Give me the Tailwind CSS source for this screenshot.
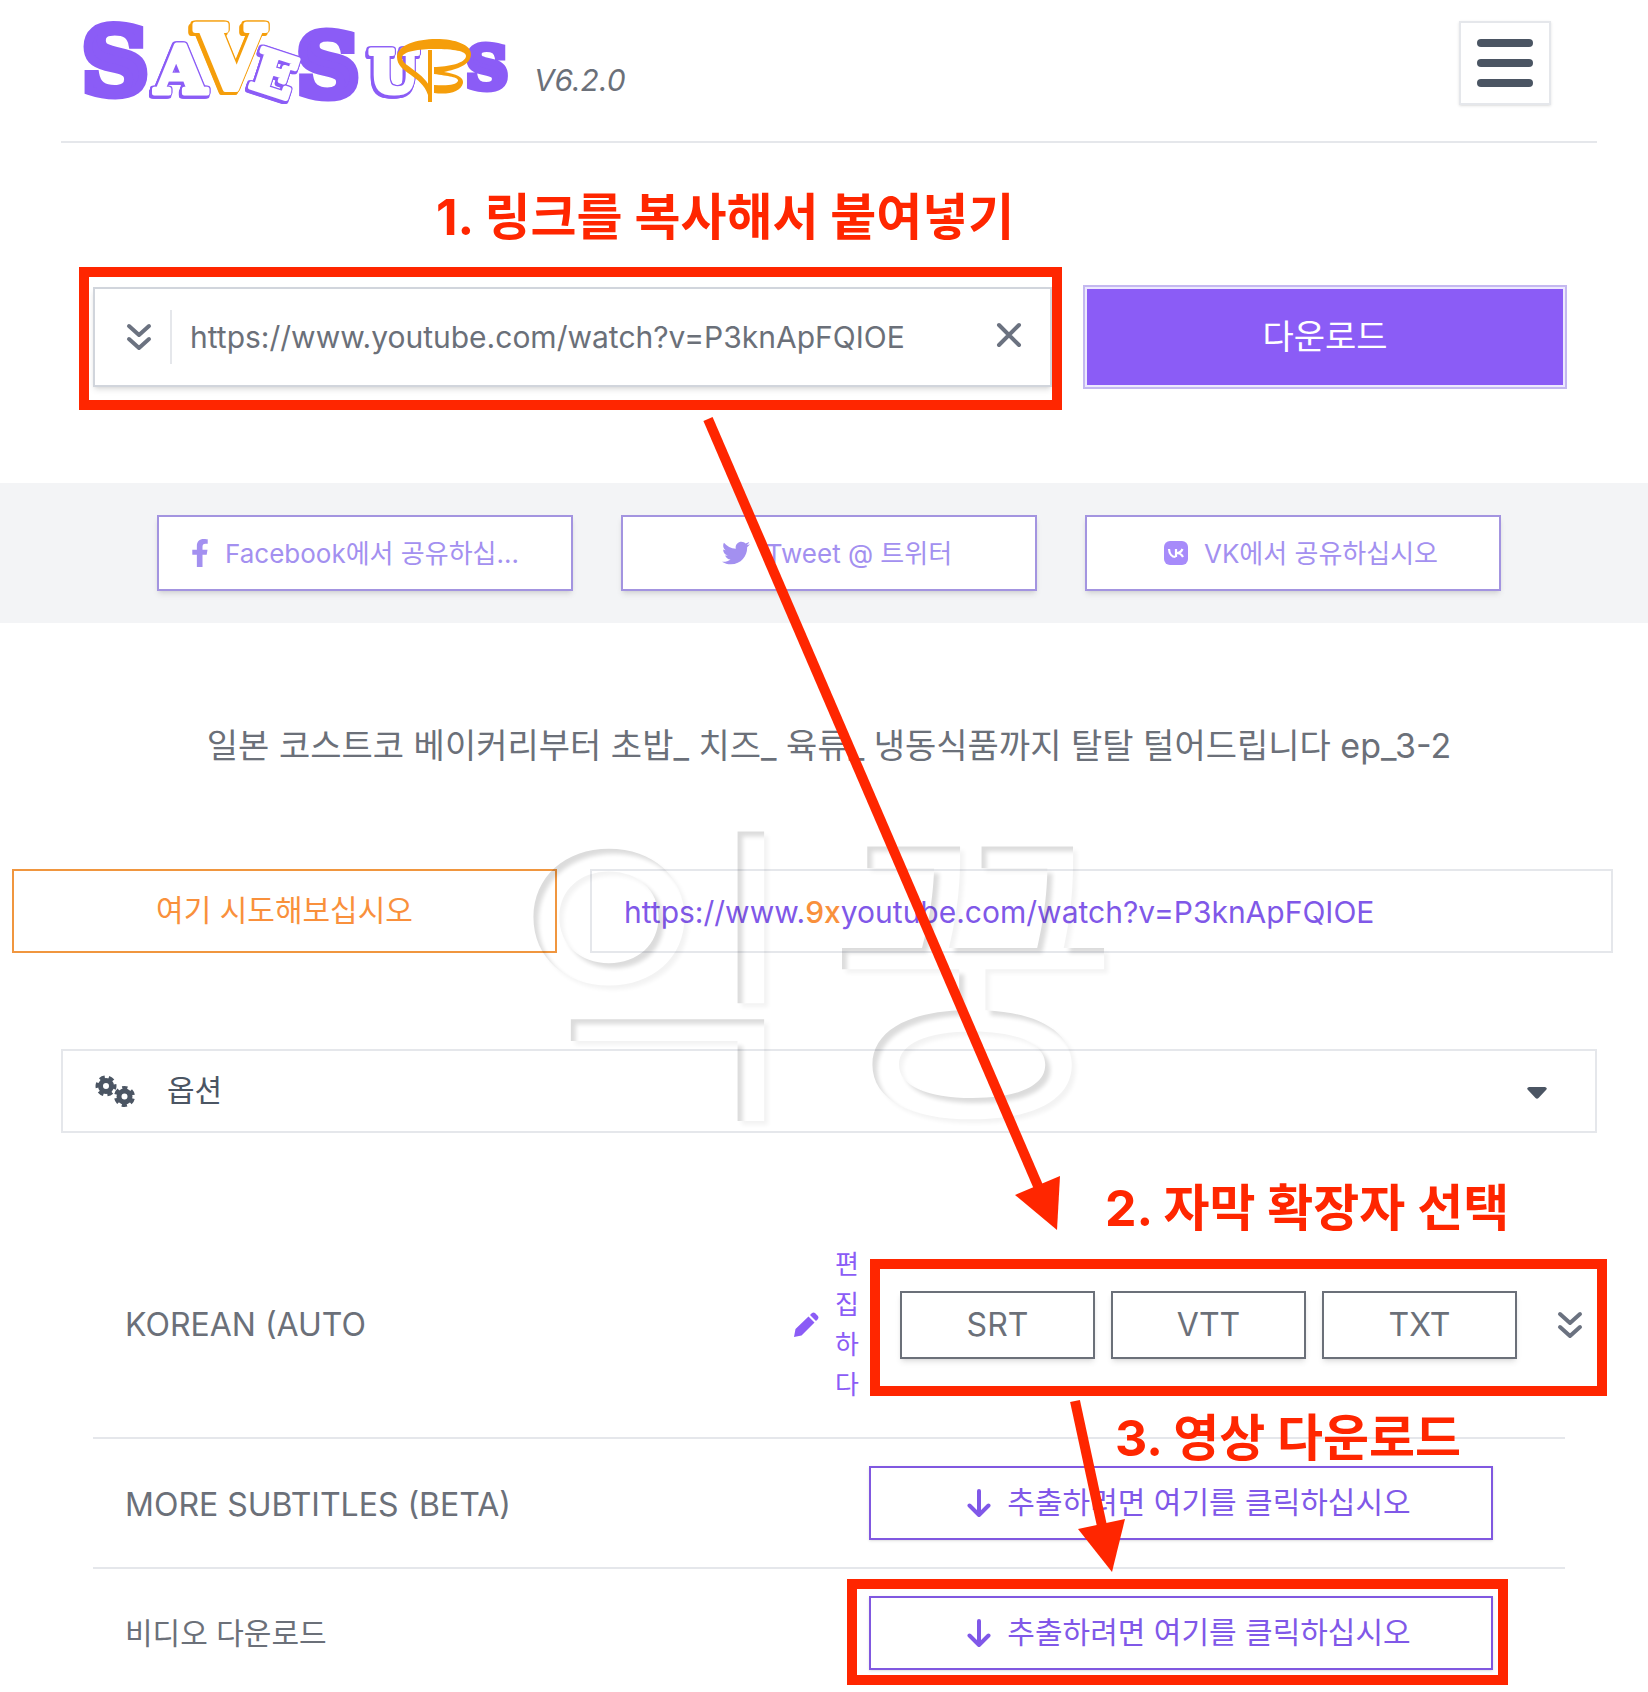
<!DOCTYPE html>
<html lang="ko">
<head>
<meta charset="utf-8">
<meta name="viewport" content="width=device-width, initial-scale=1">
<title>SaveSubs</title>
<script src="https://cdn.jsdelivr.net/npm/@tailwindcss/browser@4"></script>
</head>
<body class="bg-white font-['Inter','Noto_Sans_CJK_KR',sans-serif] text-[#6b7079]">
<div class="relative overflow-hidden pb-[22px]">

  <!-- Header -->
  <header class="ml-[61px] mr-[51px] flex h-[143px] items-start justify-between border-b-2 border-gray-200 pt-[21px] pr-[46px] pl-[21px]">
    <div class="flex items-start">
      <a href="#" aria-label="SaveSubs">
        <svg class="h-[88px] w-[432px] overflow-visible" viewBox="0 0 432 88" font-family="DejaVu Serif" font-weight="700">
          <g fill="#8b5cf6" stroke="#8b5cf6" stroke-width="9">
            <text x="0" y="73" font-size="92">S</text>
            <text x="215" y="75" font-size="86">S</text>
            <text x="384" y="67" font-size="58" stroke-width="7">S</text>
          </g>
          <g class="[filter:drop-shadow(1px_0_0_#8b5cf6)_drop-shadow(-2px_0_0_#8b5cf6)_drop-shadow(0_-1px_0_#8b5cf6)_drop-shadow(-1px_3px_0_#8b5cf6)]" fill="#fff" stroke="#fff" stroke-width="5" stroke-linejoin="round">
            <text x="73" y="72" font-size="66">A</text>
            <text x="171" y="72" font-size="56" transform="rotate(18 190 53)">E</text>
            <text x="287" y="71" font-size="57">U</text>
          </g>
          <g class="[filter:drop-shadow(1px_0_0_#f59e0b)_drop-shadow(-2px_0_0_#f59e0b)_drop-shadow(0_-1px_0_#f59e0b)_drop-shadow(-2px_3px_0_#f59e0b)]" fill="#fff" stroke="#fff" stroke-width="6" stroke-linejoin="round">
            <text x="114" y="68" font-size="88">V</text>
          </g>
          <g fill="#f59e0b">
            <path d="M346 29h4v52h-4z"/>
            <path d="M346 74C340 54 315 52 315 36C315 24 335 18 354 18C374 18 389 24 389 33C389 44 375 48 362 51C374 53 382 56 381 62C379 71 366 74 352 72V64C366 65 374 64 376 60C377 56 366 55 352 53V46C366 46 384 42 384 35C384 30 372 28 352 28C338 28 320 30 320 37C321 46 342 50 350 70Z"/>
          </g>
        </svg>
      </a>
      <span class="ml-5 pt-[39px] text-[30px] leading-10 italic">V6.2.0</span>
    </div>
    <button class="flex h-[84px] w-[92px] flex-col items-center justify-center gap-3 border-2 border-gray-200 shadow-sm" aria-label="Menu">
      <span class="h-2 w-14 rounded-full bg-[#4b5563]"></span>
      <span class="h-2 w-14 rounded-full bg-[#4b5563]"></span>
      <span class="h-2 w-14 rounded-full bg-[#4b5563]"></span>
    </button>
  </header>

  <!-- Search -->
  <form class="mr-[81px] ml-[93px] grid grid-cols-[959fr_484fr] gap-[31px] pt-[144px]">
    <div class="relative flex h-[100px] min-w-0 items-center border-2 border-gray-300 pl-[31px] shadow-md">
      <svg class="h-[28px] w-[26px]" viewBox="0 0 26 28" fill="none" stroke="#6b7280" stroke-width="4" stroke-linecap="round" stroke-linejoin="round"><path d="M3 3l10 9 10-9M3 16l10 9 10-9"/></svg>
      <span class="ml-[18px] h-[54px] w-0.5 bg-gray-200"></span>
      <input class="ml-[18px] min-w-0 flex-1 text-[30px] leading-10 outline-none" type="text" aria-label="URL" value="https://www.youtube.com/watch?v=P3knApFQIOE">
      <button type="button" class="mr-7 mb-1" aria-label="Clear"><svg class="size-[26px]" viewBox="0 0 26 26" stroke="#6b7280" stroke-width="4" stroke-linecap="round"><path d="M3 3l20 20M23 3L3 23"/></svg></button>
      <span class="pointer-events-none absolute -top-[22px] -right-[12px] -bottom-[25px] -left-4 border-10 border-[#ff2600]"></span>
    </div>
    <button type="button" class="-mt-0.5 h-[104px] border-2 border-[#c4b8f0] bg-[#ede9fe] p-0.5"><span class="flex h-full items-center justify-center bg-[#8b5cf6] pb-0.5 text-[34px] text-white">다운로드</span></button>
  </form>

  <!-- Share -->
  <div class="mt-[94px] grid h-[140px] grid-cols-3 items-center gap-12 bg-gray-100 pr-[147px] pl-[157px] text-[26px] text-[#a390f0]">
    <button class="flex h-[76px] min-w-0 items-center border-2 border-[#a394e0] bg-white px-8 shadow-md">
      <svg class="mr-4 h-7 w-[18px] shrink-0" viewBox="0 0 320 512" preserveAspectRatio="none" fill="currentColor"><path d="M279.14 288l14.22-92.66h-88.91v-60.13c0-25.35 12.42-50.06 52.24-50.06h40.42V6.26S260.43 0 225.36 0c-73.22 0-121.08 44.38-121.08 124.72v70.62H22.89V288h81.39v224h100.17V288z"/></svg>
      <span class="truncate">Facebook에서 공유하십시오</span>
    </button>
    <button class="flex h-[76px] items-center justify-center border-2 border-[#a394e0] bg-white pr-4 pl-8 shadow-md">
      <svg class="mr-4 size-7 shrink-0" viewBox="0 0 512 512" fill="currentColor"><path d="M459.37 151.716c.325 4.548.325 9.097.325 13.645 0 138.72-105.583 298.558-298.558 298.558-59.452 0-114.68-17.219-161.137-47.106 8.447.974 16.568 1.299 25.34 1.299 49.055 0 94.213-16.568 130.274-44.832-46.132-.975-84.792-31.188-98.112-72.772 6.498.974 12.995 1.624 19.818 1.624 9.421 0 18.843-1.3 27.614-3.573-48.081-9.747-84.143-51.98-84.143-102.985v-1.299c13.969 7.797 30.214 12.67 47.431 13.319-28.264-18.843-46.781-51.005-46.781-87.391 0-19.492 5.197-37.36 14.294-52.954 51.655 63.675 129.3 105.258 216.365 109.807-1.624-7.797-2.599-15.918-2.599-24.04 0-57.828 46.782-104.934 104.934-104.934 30.213 0 57.502 12.67 76.67 33.137 23.715-4.548 46.456-13.32 66.599-25.34-7.798 24.366-24.366 44.833-46.132 57.827 21.117-2.273 41.584-8.122 60.426-16.243-14.292 20.791-32.161 39.308-52.628 54.253z"/></svg>
      <span>Tweet @ 트위터</span>
    </button>
    <button class="flex h-[76px] items-center justify-center border-2 border-[#a394e0] bg-white pr-4 pl-8 shadow-md">
      <svg class="mr-4 size-6 shrink-0" viewBox="0 0 24 24"><rect width="24" height="24" rx="6" fill="#a78bfa"/><path d="M5 8c.3 5 3 8 6.500 8M12 8v8M18.500 8c-1 2.300-3 4-6 4 3 0 5.200 1.500 6.500 4" fill="none" stroke="#fff" stroke-width="2.200"/></svg>
      <span>VK에서 공유하십시오</span>
    </button>
  </div>

  <h1 class="mt-[98px] pl-[10px] text-center text-[34px] leading-[50px] whitespace-nowrap">일본 코스트코 베이커리부터 초밥_ 치즈_ 육류_ 냉동식품까지 탈탈 털어드립니다 ep_3-2</h1>

  <div class="mt-[98px] mr-[35px] ml-3 grid grid-cols-[545fr_1023fr] gap-[33px]">
    <button class="h-[84px] border-2 border-[#f0963f] pb-0.5 text-[30px] text-[#f9903c]">여기 시도해보십시오</button>
    <div class="flex h-[84px] items-center border-2 border-gray-200 pt-0.5 pl-8 text-[30px] text-[#8058e8]"><a href="#">https://www.<span class="font-medium text-[#f9903c]">9x</span>youtube.com/watch?v=P3knApFQIOE</a></div>
  </div>

  <button class="mt-24 mr-[51px] ml-[61px] flex h-[84px] w-[calc(100%-112px)] items-center border-2 border-gray-200 pr-12 pl-8 text-[30px] text-[#4b5563]">
    <svg class="h-8 w-10" viewBox="0 0 40 32" fill="none" stroke="#4b5563"><circle cx="11" cy="11" r="5.500" stroke-width="5"/><circle cx="11" cy="11" r="8.500" stroke-width="4" stroke-dasharray="5 3.900" stroke-dashoffset="2"/><circle cx="29.500" cy="21.500" r="5.500" stroke-width="5"/><circle cx="29.500" cy="21.500" r="8.500" stroke-width="4" stroke-dasharray="5 3.900" stroke-dashoffset="-2"/></svg>
    <span class="ml-8 flex-1 pb-0.5 text-left">옵션</span>
    <svg class="mt-1 h-3 w-5" viewBox="0 0 20 12" fill="#4b5563"><path d="M2 0h16q3 1 1 3l-7.500 8q-1.500 1.500-3 0L1 3Q-1 1 2 0z"/></svg>
  </button>

  <!-- Subtitle rows -->
  <section class="mt-[78px] mr-[83px] ml-[93px] text-[32px]">
    <div class="flex h-[228px] items-center justify-between border-b-2 border-gray-200 pt-0.5 pl-8">
      <span>KOREAN (AUTO</span>
      <div class="-mr-[18px] flex items-center">
        <a href="#" class="mr-[41px] flex items-center gap-4 text-[26px] leading-10 text-[#8b5cf6]">
          <svg class="size-[26px]" viewBox="0 0 26 26" fill="currentColor"><path d="M1 25l1.500-8L15.500 4.500l6 6L8.500 23.500zM17 3l2-2q1.500-1 3 0l3 3q1 1.500 0 3l-2 2z"/></svg>
          <span class="w-6">편<br>집<br>하<br>다</span>
        </a>
        <div class="relative flex gap-4">
          <button class="h-[68px] w-[195px] border-2 border-[#6b7079] bg-white shadow-md">SRT</button>
          <button class="h-[68px] w-[195px] border-2 border-[#6b7079] bg-white shadow-md">VTT</button>
          <button class="h-[68px] w-[195px] border-2 border-[#6b7079] bg-white shadow-md">TXT</button>
          <button class="ml-[24px]" aria-label="More formats"><svg class="h-[28px] w-[26px]" viewBox="0 0 26 28" fill="none" stroke="#6b7280" stroke-width="4" stroke-linecap="round" stroke-linejoin="round"><path d="M3 3l10 9 10-9M3 16l10 9 10-9"/></svg></button>
          <span class="pointer-events-none absolute -top-8 -right-6 -bottom-[37px] -left-[30px] border-10 border-[#ff2600]"></span>
        </div>
      </div>
    </div>
    <div class="flex h-[130px] items-center justify-between border-b-2 border-gray-200 pr-[72px] pl-8">
      <span class="pt-1">MORE SUBTITLES (BETA)</span>
      <button class="flex h-[74px] w-[624px] items-center justify-center gap-4 border-2 border-[#8058e0] pl-4 text-[30px] text-[#8058e8] shadow-sm">
        <svg class="h-[30px] w-6" viewBox="0 0 24 30" fill="none" stroke="currentColor" stroke-width="4" stroke-linecap="round" stroke-linejoin="round"><path d="M12 3v24M2.500 17.500L12 27l9.500-9.500"/></svg>
        <span class="pb-0.5">추출하려면 여기를 클릭하십시오</span>
      </button>
    </div>
    <div class="flex h-[128px] items-center justify-between pr-[72px] pl-8">
      <span class="text-[30px]">비디오 다운로드</span>
      <div class="relative">
        <button class="flex h-[74px] w-[624px] items-center justify-center gap-4 border-2 border-[#8058e0] pl-4 text-[30px] text-[#8058e8] shadow-sm">
          <svg class="h-[30px] w-6" viewBox="0 0 24 30" fill="none" stroke="currentColor" stroke-width="4" stroke-linecap="round" stroke-linejoin="round"><path d="M12 3v24M2.500 17.500L12 27l9.500-9.500"/></svg>
          <span class="pb-0.5">추출하려면 여기를 클릭하십시오</span>
        </button>
        <span class="pointer-events-none absolute -top-[17px] -right-[15px] -bottom-[15px] -left-[22px] border-10 border-[#ff2600]"></span>
      </div>
    </div>
  </section>

  <!-- Watermark and annotations laid over the page -->
  <svg class="pointer-events-none absolute top-0 left-0 h-[1692px] w-[1648px]" viewBox="0 0 1648 1692">
    <defs>
      <filter id="emboss" x="-10%" y="-10%" width="120%" height="120%">
        <feGaussianBlur in="SourceAlpha" stdDeviation="2" result="b"/>
        <feOffset in="b" dx="5" dy="5" result="o"/>
        <feComposite in="SourceAlpha" in2="o" operator="out" result="dark"/>
        <feOffset in="b" dx="4" dy="4" result="o2"/>
        <feComposite in="o2" in2="SourceAlpha" operator="out" result="light"/>
        <feComponentTransfer in="dark" result="d"><feFuncA type="linear" slope="0.140"/></feComponentTransfer>
        <feComponentTransfer in="light" result="l"><feFuncA type="linear" slope="0.050"/></feComponentTransfer>
        <feMerge><feMergeNode in="l"/><feMergeNode in="d"/></feMerge>
      </filter>
    </defs>
    <g font-size="320" font-family="Noto Sans CJK KR" filter="url(#emboss)">
      <text x="511" y="1096">익</text>
      <text x="826" y="1096">꿍</text>
    </g>
    <g fill="#ff2600" stroke="#ff2600">
      <path d="M708 419L1038 1186" stroke-width="10"/>
      <path d="M1015 1195L1060 1176L1057 1230z" stroke="none"/>
      <path d="M1075 1401L1102 1526" stroke-width="10"/>
      <path d="M1078 1529L1125 1519L1112 1572z" stroke="none"/>
    </g>
  </svg>
  <p class="absolute top-[187px] left-[436px] text-[50px] leading-[60px] font-bold whitespace-nowrap text-[#ff2600]">1. 링크를 복사해서 붙여넣기</p>
  <p class="absolute top-[1178px] left-[1105px] text-[50px] leading-[60px] font-bold whitespace-nowrap text-[#ff2600]">2. 자막 확장자 선택</p>
  <p class="absolute top-[1408px] left-[1115px] text-[50px] leading-[60px] font-bold whitespace-nowrap text-[#ff2600]">3. 영상 다운로드</p>
</div>
</body>
</html>
